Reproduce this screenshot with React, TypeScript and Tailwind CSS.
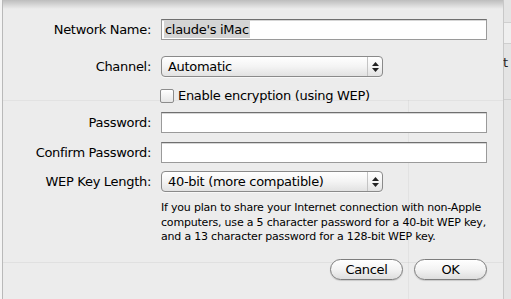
const font = "font-['Lucida_Grande','DejaVu_Sans',sans-serif]";

function Field({ children }: { children?: React.ReactNode }) {
  return (
    <div className="h-[21px] w-[326px] bg-white border border-[#9a9a9a] border-t-[#6f6f6f] shadow-[inset_0_1px_0_#d6d6d6] flex items-center px-[2px] text-[13px] tracking-[-0.3px]">
      {children}
    </div>
  );
}

function Popup({ label }: { label: string }) {
  return (
    <div className="h-[21px] w-[222px] rounded-[4px] border border-[#8a8a8a] bg-gradient-to-b from-white via-[#f4f4f4] to-[#e2e2e2] flex items-center text-[13px] tracking-[-0.3px] shadow-[0_1px_0_rgba(255,255,255,0.6)]">
      <span className="flex-1 pl-[6px] leading-none">{label}</span>
      <div className="w-[15px] h-full border-l border-[#c4c4c4] flex flex-col items-center justify-center gap-[2px]">
        <svg width="7" height="4" viewBox="0 0 7 4"><path d="M3.5 0 L7 4 L0 4 Z" fill="#222" /></svg>
        <svg width="7" height="4" viewBox="0 0 7 4"><path d="M0 0 L7 0 L3.5 4 Z" fill="#222" /></svg>
      </div>
    </div>
  );
}

function Label({ children }: { children: React.ReactNode }) {
  return <div className="text-right text-[13px] tracking-[-0.3px] text-black pr-[1px]">{children}</div>;
}

function Button({ children }: { children: React.ReactNode }) {
  return (
    <button className="h-[21px] w-[73px] rounded-full border border-[#7d7d7d] bg-gradient-to-b from-white via-[#f3f3f3] to-[#dedede] text-[13px] tracking-[-0.3px] text-black leading-none shadow-[0_1px_1px_rgba(0,0,0,0.15)]">
      {children}
    </button>
  );
}

export default function App() {
  return (
    <div className={`${font} w-[511px] h-[299px] overflow-hidden flex bg-[#e8e8e8] text-black`}>
      {/* window behind, left edge */}
      <div className="w-[3px] bg-[#f4f4f4] border-r border-[#b9b9b9]" />

      {/* sheet */}
      <div className="relative flex-1 bg-[#ececec]">
        <div className="absolute inset-x-0 top-0 h-[9px] bg-gradient-to-b from-[#bdbdbd] to-transparent" />

        {/* faint outlines of the window behind the sheet */}
        <div className="absolute inset-0 pointer-events-none">
          <div className="absolute left-0 top-[100px] w-full border-t border-black/[0.04]" />
          <div className="absolute left-0 top-[262px] w-full border-t border-black/[0.05]" />
          <div className="absolute left-[405px] top-[100px] h-[199px] border-l border-black/[0.04]" />
        </div>

        {/* form */}
        <div className="relative grid grid-cols-[149px_326px] gap-x-[9px] pt-[19px] items-center">
          <Label>Network Name:</Label>
          <Field>
            <span className="bg-[#d4d4d4] leading-[17px] px-[1px]">claude's iMac</span>
          </Field>

          <div className="col-span-2 h-[16px]" />

          <Label>Channel:</Label>
          <Popup label="Automatic" />

          <div className="col-span-2 h-[11px]" />

          <div />
          <label className="h-[15px] flex items-center gap-[4px] text-[13px] tracking-[-0.3px] leading-[15px] -ml-[1px]">
            <span className="w-[14px] h-[14px] rounded-[2px] border border-[#8c8c8c] bg-gradient-to-b from-white to-[#e6e6e6]" />
            Enable encryption (using WEP)
          </label>

          <div className="col-span-2 h-[9px]" />

          <Label>Password:</Label>
          <Field />

          <div className="col-span-2 h-[9px]" />

          <Label>Confirm Password:</Label>
          <Field />

          <div className="col-span-2 h-[8px]" />

          <Label>WEP Key Length:</Label>
          <Popup label="40-bit (more compatible)" />

          <div className="col-span-2 h-[9px]" />

          <div />
          <p className="text-[11px] leading-[14.5px] tracking-[-0.2px] whitespace-nowrap">
            If you plan to share your Internet connection with non-Apple
            <br />
            computers, use a 5 character password for a 40-bit WEP key,
            <br />
            and a 13 character password for a 128-bit WEP key.
          </p>
        </div>

        <div className="relative flex justify-end gap-[11px] pr-[16px] mt-[14px]">
          <Button>Cancel</Button>
          <Button>OK</Button>
        </div>
      </div>

      {/* window behind, right edge */}
      <div className="w-[8px] bg-[#e4e4e4] border-l border-[#c8c8c8] flex flex-col">
        <div className="mt-[22px] h-[22px] border-y border-[#cfcfcf] bg-[#efefef]" />
        <div className="mt-[12px] text-[13px] leading-none -ml-[1px] text-[#222]">t</div>
        <div className="mt-[30px] border-t border-[#cfcfcf]" />
      </div>
    </div>
  );
}
